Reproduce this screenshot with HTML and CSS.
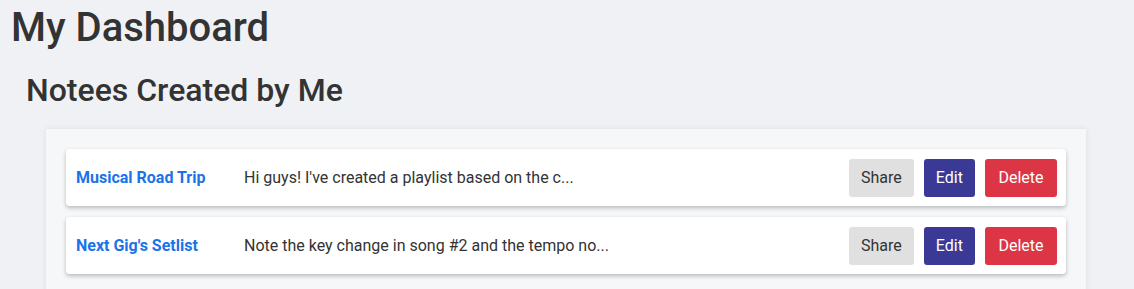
FILE: index.html
```html
<!DOCTYPE html>
<html lang="en">
<head>
    <meta charset="UTF-8">
    <meta name="viewport" content="width=device-width, initial-scale=1.0">
    <title>My Dashboard</title>
    <link rel="stylesheet" href="styles.css">
</head>
<body>
    <h1>My Dashboard</h1>
    <h2>Notees Created by Me</h2>

    <div class="notes-panel">
        <div class="note-card">
            <a class="note-title" href="#">Musical Road Trip</a>
            <span class="note-text">Hi guys! I've created a playlist based on the c...</span>
            <div class="note-actions">
                <button class="btn btn-share">Share</button>
                <button class="btn btn-edit">Edit</button>
                <button class="btn btn-delete">Delete</button>
            </div>
        </div>
        <div class="note-card">
            <a class="note-title" href="#">Next Gig's Setlist</a>
            <span class="note-text">Note the key change in song #2 and the tempo no...</span>
            <div class="note-actions">
                <button class="btn btn-share">Share</button>
                <button class="btn btn-edit">Edit</button>
                <button class="btn btn-delete">Delete</button>
            </div>
        </div>
    </div>
</body>
</html>
```

FILE: styles.css
```css
body {
    background-color: #f0f1f5;
    font-family: Roboto, "Liberation Sans", sans-serif;
    color: #333;
    margin: 0;
    padding: 0 11px;
}

h1 {
    font-size: 40px;
    font-weight: 500;
    margin: 0;
    padding-top: 4px;
    line-height: 47px;
}

h2 {
    font-size: 32px;
    font-weight: 500;
    margin: 20px 0 0 15px;
    line-height: 38px;
}

.notes-panel {
    background-color: #f6f7f9;
    margin: 20px 37px 0 35px;
    padding: 20px;
    box-shadow: 0 0 6px rgba(0, 0, 0, 0.08);
    display: flex;
    flex-direction: column;
    gap: 11px;
}

.note-card {
    background-color: #fff;
    border-radius: 4px;
    box-shadow: 0 2px 4px rgba(0, 0, 0, 0.25);
    padding: 10px 9px 10px 10px;
    display: flex;
    align-items: center;
    height: 37px;
}

.note-title {
    color: #1a73e8;
    font-weight: bold;
    font-size: 16px;
    text-decoration: none;
    width: 168px;
}

.note-text {
    font-size: 16px;
    color: #333;
    flex: 1;
}

.note-actions {
    display: flex;
    gap: 10px;
}

.btn {
    font-family: Roboto, "Liberation Sans", sans-serif;
    font-size: 16px;
    border: none;
    border-radius: 3px;
    padding: 0 12px;
    height: 38px;
    cursor: pointer;
}

.btn-share {
    background-color: #e0e0e0;
    color: #333;
}

.btn-edit {
    background-color: #3a3a96;
    color: #fff;
}

.btn-delete {
    background-color: #dc3545;
    color: #fff;
    padding: 0 13.5px;
}
```
